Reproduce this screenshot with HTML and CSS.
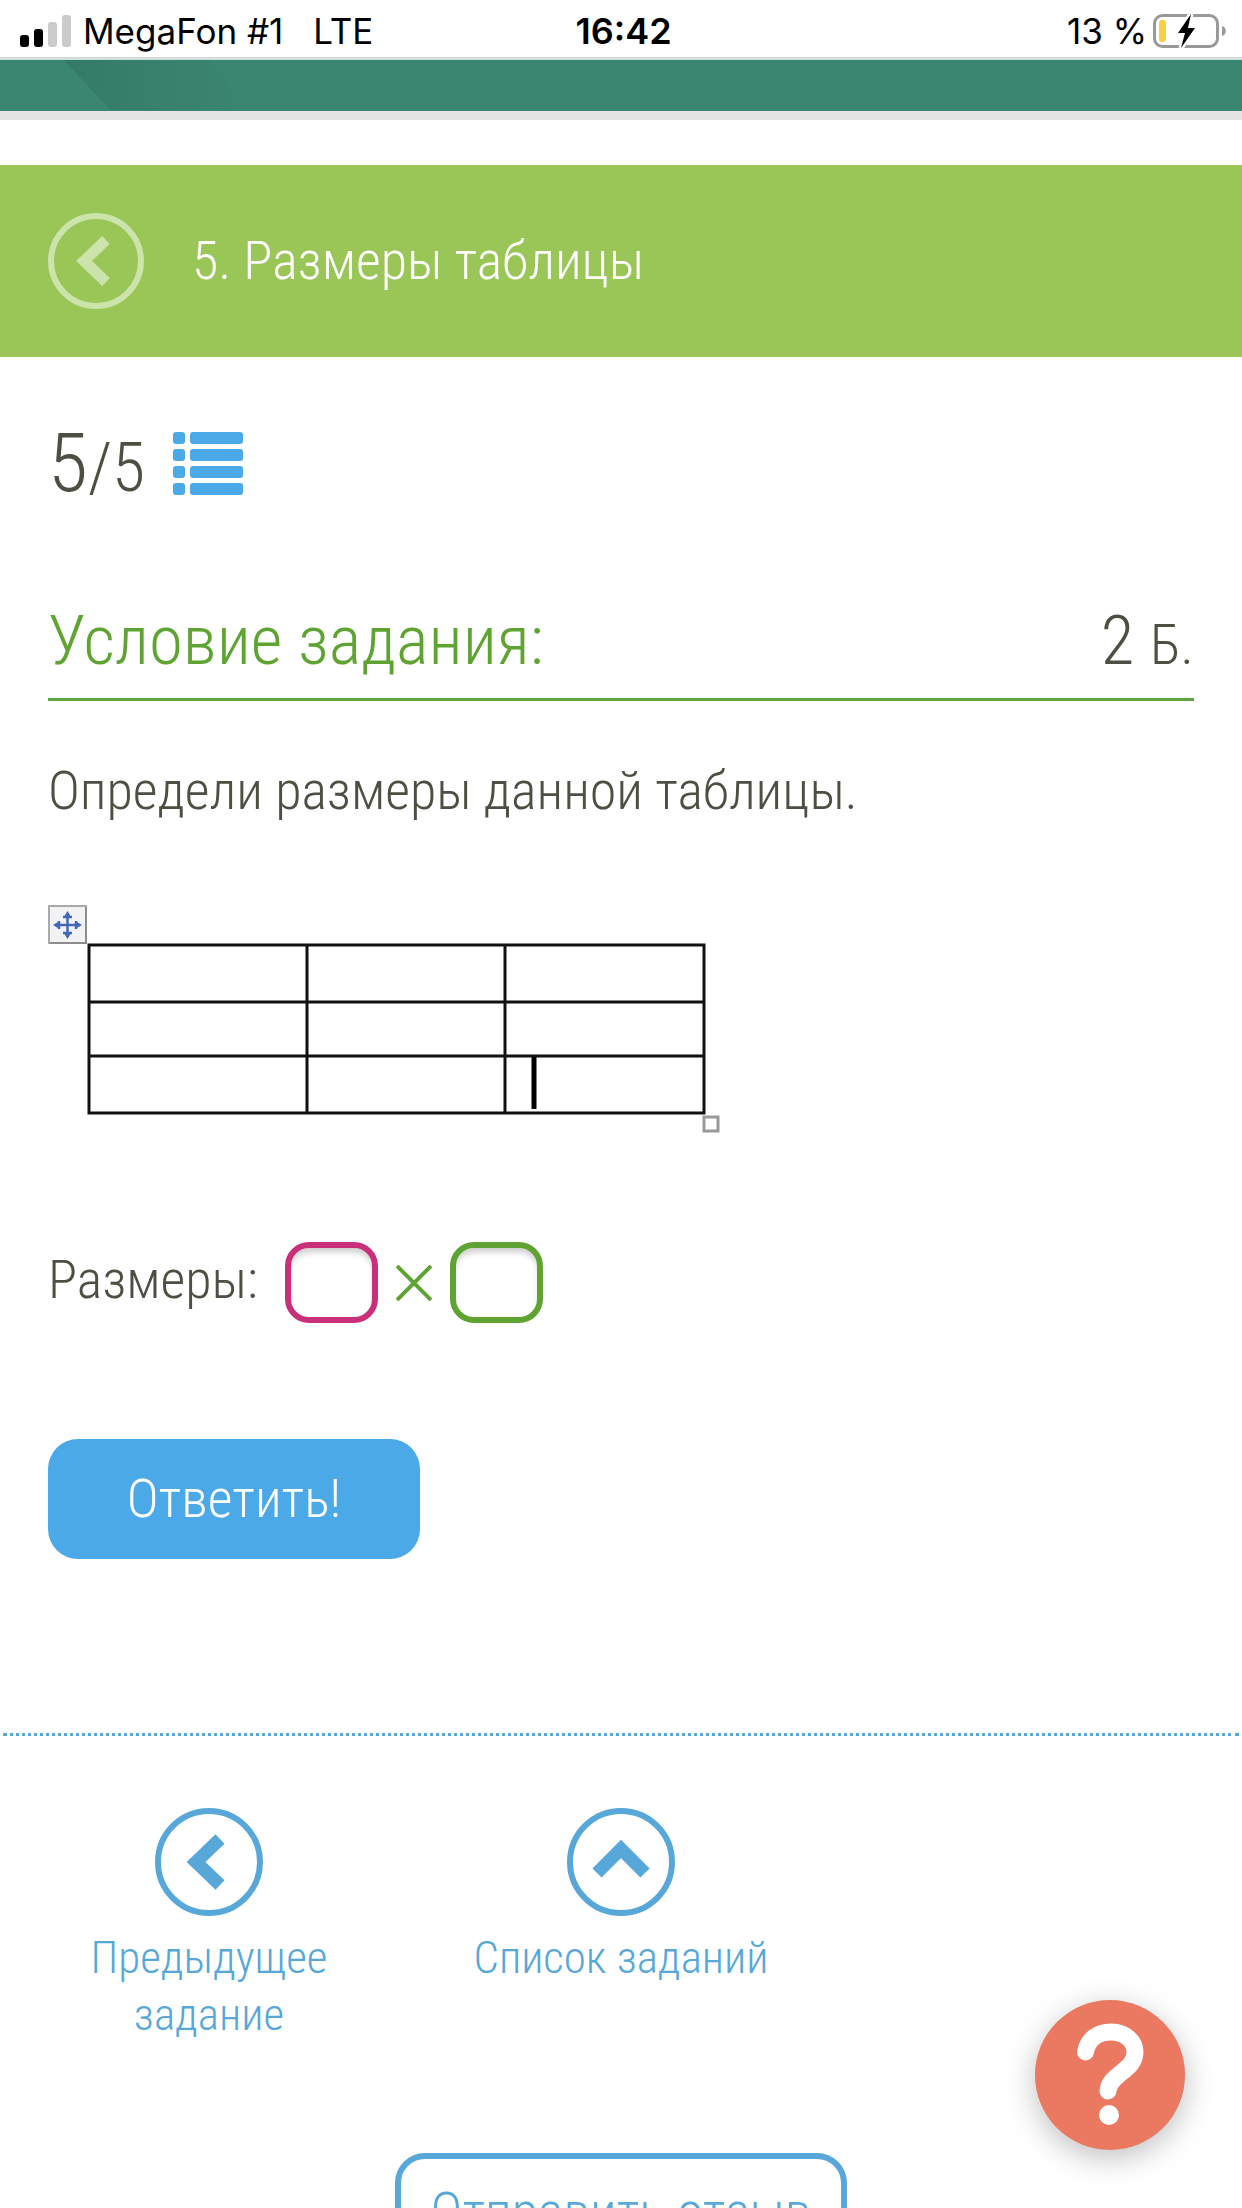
FILE: index.html
```html
<!DOCTYPE html>
<html lang="ru">
<head>
<meta charset="utf-8">
<meta name="viewport" content="width=device-width">
<title>5. Размеры таблицы</title>
<link rel="stylesheet" href="styles.css">
</head>
<body>
<div class="screen">
  <div class="status">
    <div class="status-side">
      <svg class="signal" width="52" height="34" viewBox="0 0 52 34" aria-hidden="true">
        <rect x="0" y="21" width="9" height="12" rx="3" fill="#000"/>
        <rect x="14" y="15" width="9" height="18" rx="3" fill="#000"/>
        <rect x="28" y="8" width="9" height="25" rx="3" fill="#cbcbcb"/>
        <rect x="42" y="1" width="9" height="32" rx="3" fill="#cbcbcb"/>
      </svg>
      <span class="carrier">MegaFon #1</span>
      <span>LTE</span>
    </div>
    <time class="clock">16:42</time>
    <div class="status-side status-end">
      <span>13 %</span>
      <svg class="battery" width="74" height="36" viewBox="0 0 74 36" aria-hidden="true">
        <rect x="1.500" y="2.500" width="63" height="31" rx="8" fill="none" stroke="#999" stroke-width="3"/>
        <path d="M69 13c5 1 5 9 0 10z" fill="#999"/>
        <rect x="6" y="7" width="7" height="22" rx="3" fill="#f7ce46"/>
        <path d="M38 1 25 20h7l-4 15 14-20h-7l3-14z" fill="#000" stroke="#fff" stroke-width="5" paint-order="stroke"/>
      </svg>
    </div>
  </div>

  <div class="banner">
    <svg class="banner-art" width="300" height="50" viewBox="0 0 300 50" aria-hidden="true">
      <defs><linearGradient id="fade"><stop offset="0" stop-color="#347b67"/><stop offset="1" stop-color="#3b8670"/></linearGradient></defs>
      <path d="M64 0H210L250 50H110z" fill="url(#fade)"/>
    </svg>
  </div>

  <header class="topic">
    <a class="back" href="#" aria-label="Назад">
      <svg width="96" height="96" viewBox="0 0 96 96"><circle cx="48" cy="48" r="45" fill="none" stroke="currentColor" stroke-width="6"/><path d="M58 27 36 48 58 69" fill="none" stroke="currentColor" stroke-width="11"/></svg>
    </a>
    <h1 class="topic-title">5. Размеры таблицы</h1>
  </header>

  <main class="task">
    <div class="progress">
      <span class="count"><span class="count-now">5</span>/5</span>
      <a href="#" aria-label="Все задания">
        <svg class="list-icon" width="70" height="66" viewBox="0 0 70 66" fill="#4ca9e8">
          <rect x="0" y="0" width="12" height="12" rx="3"/><rect x="17" y="0" width="53" height="12" rx="3"/>
          <rect x="0" y="17" width="12" height="12" rx="3"/><rect x="17" y="17" width="53" height="12" rx="3"/>
          <rect x="0" y="34" width="12" height="12" rx="3"/><rect x="17" y="34" width="53" height="12" rx="3"/>
          <rect x="0" y="51" width="12" height="12" rx="3"/><rect x="17" y="51" width="53" height="12" rx="3"/>
        </svg>
      </a>
    </div>

    <div class="heading">
      <h2 class="heading-title">Условие задания:</h2>
      <span class="points">2 <span class="points-unit">Б.</span></span>
    </div>

    <p class="text">Определи размеры данной таблицы.</p>

    <svg class="figure" width="674" height="230" viewBox="0 0 674 230" role="img" aria-label="Таблица">
      <rect x="1" y="1" width="37" height="37" fill="#f1f2f4" stroke="#aaa" stroke-width="2"/>
      <path d="M2 38H38V2" fill="none" stroke="#8d8d8d" stroke-width="2"/>
      <path d="M19.500 8V32M7 20H32M15 12h9M15 28h9M11 16v8M28 16v8" fill="none" stroke="#4468b8" stroke-width="2.500"/>
      <path d="m19.500 6 3 5h-6zM19.500 34l3-5h-6zM5 20l5-3v6zM34 20l-5-3v6z" fill="#4468b8"/>
      <path d="M41 40H656V208H41zM41 97H656M41 151H656M259 40V208M457 40V208" fill="none" stroke="#111" stroke-width="3"/>
      <path d="M486 152V204" stroke="#000" stroke-width="5"/>
      <rect x="656" y="212" width="14" height="14" fill="#fff" stroke="#999" stroke-width="3"/>
    </svg>

    <form class="answer">
      <div class="sizes">
        <span class="text sizes-label">Размеры:</span>
        <input class="cell cell-rows" type="text" aria-label="Первый размер">
        <svg class="times" width="36" height="36" viewBox="0 0 36 36" aria-hidden="true"><path d="M1 1 35 35M35 1 1 35" stroke="#5fa433" stroke-width="4"/></svg>
        <input class="cell cell-cols" type="text" aria-label="Второй размер">
      </div>
      <button class="submit" type="button">Ответить!</button>
    </form>
  </main>

  <nav class="pager">
    <a class="pager-link" href="#">
      <svg width="108" height="108" viewBox="0 0 108 108" fill="none" stroke="currentColor"><circle cx="54" cy="54" r="51" stroke-width="6"/><path d="M65 31 41 54 65 77" stroke-width="13"/></svg>
      <span>Предыдущее задание</span>
    </a>
    <a class="pager-link" href="#">
      <svg width="108" height="108" viewBox="0 0 108 108" fill="none" stroke="currentColor"><circle cx="54" cy="54" r="51" stroke-width="6"/><path d="M30 65 54 41 78 65" stroke-width="13"/></svg>
      <span>Список заданий</span>
    </a>
  </nav>

  <button class="feedback" type="button">Отправить отзыв</button>

  <button class="help" type="button" aria-label="Помощь">
    <svg width="150" height="150" viewBox="0 0 150 150" fill="none" stroke="#fff" stroke-linecap="round">
      <path d="M50.500 52C53 39 63 32 76 32C90 32 100 41 100 52C100 71 74 74 73 91" stroke-width="17"/>
      <circle cx="74" cy="115" r="10" fill="#fff" stroke="none"/>
    </svg>
  </button>
</div>
</body>
</html>
```
FILE: styles.css
```css
* { box-sizing: border-box; }

body {
  margin: 0;
  background: #fff;
  color: #4e4e42;
  font-family: "Roboto Condensed", "Liberation Sans Narrow", Roboto, sans-serif;
  font-weight: 300;
}

h1, h2, p { margin: 0; font-weight: inherit; }
a { color: inherit; text-decoration: none; }
svg { display: block; flex: none; }
button, input { font: inherit; }

.screen {
  display: flex;
  flex-direction: column;
  height: 100vh;
  overflow: hidden;
}
.screen > * { flex-shrink: 0; }

.status {
  display: flex;
  align-items: center;
  height: 60px;
  padding: 5px 15px 0 20px;
  border-bottom: 3px solid #d0dfd9;
  color: #000;
  font: 400 35px/40px Inter, sans-serif;
}
.status-side { display: flex; flex: 1; align-items: center; }
.status-end { justify-content: flex-end; gap: 6px; }
.signal { margin-right: 11px; }
.carrier { margin-right: 30px; }
.clock { font-size: 36px; font-weight: 600; }

.banner {
  height: 60px;
  background: #3b8670;
  border-bottom: 9px solid #e5e5e5;
  overflow: hidden;
}

.topic {
  display: flex;
  align-items: center;
  gap: 48px;
  height: 192px;
  margin-top: 45px;
  padding: 0 48px;
  background: #99c657;
  color: #fff;
}
.back { color: #cce3ab; }
.topic-title { font-size: 54px; line-height: 72px; }

.task { padding: 60px 48px 174px; }

.progress { display: flex; align-items: center; gap: 28px; height: 96px; }
.count { font-size: 68px; line-height: 96px; }
.count-now { font-size: 82px; }

.heading {
  display: flex;
  justify-content: space-between;
  align-items: baseline;
  margin-top: 83px;
  padding-bottom: 8px;
  border-bottom: 3px solid #5fa443;
  font-size: 69px;
  line-height: 90px;
}
.heading-title { color: #5fa433; font-size: inherit; }
.points-unit { font-size: 56px; }

.text { font-size: 54px; line-height: 72px; }
p.text { margin-top: 54px; }

.figure { margin-top: 78px; }

.sizes { display: flex; align-items: center; margin-top: 107px; }
.sizes-label { margin-right: 27px; padding-bottom: 6px; }
.cell {
  width: 93px;
  height: 81px;
  padding: 0 12px;
  border: 6px solid;
  border-radius: 24px;
  background: #fff;
  box-shadow: inset 0 6px 6px -2px #ccc;
  font-size: 42px;
}
.cell-rows { border-color: #c93079; }
.cell-cols { border-color: #5fa433; }
.times { margin: 0 18px; }

.submit {
  display: block;
  width: 372px;
  height: 120px;
  margin-top: 116px;
  padding: 0 0 2px;
  border: 0;
  border-radius: 30px;
  background: #4ca9e8;
  color: #fff;
  font-size: 54px;
}

.pager {
  display: grid;
  grid-template-columns: repeat(3, 1fr);
  margin: 0 3px;
  padding-top: 72px;
  border-top: 3px dotted #57a7d8;
  color: #57a7d8;
  font-size: 45px;
  line-height: 57px;
  text-align: center;
}
.pager-link {
  display: flex;
  flex-direction: column;
  align-items: center;
  gap: 13px;
  padding: 0 48px;
}

.feedback {
  align-self: center;
  width: 452px;
  height: 117px;
  margin-top: 110px;
  border: 6px solid #57a7d8;
  border-radius: 30px;
  background: #fff;
  color: #57a7d8;
  font-size: 54px;
}

.help {
  position: fixed;
  right: 57px;
  bottom: 58px;
  padding: 0;
  border: 0;
  border-radius: 50%;
  background: #eb7860;
  box-shadow: 0 8px 30px rgba(0, 0, 0, .25);
}
```
